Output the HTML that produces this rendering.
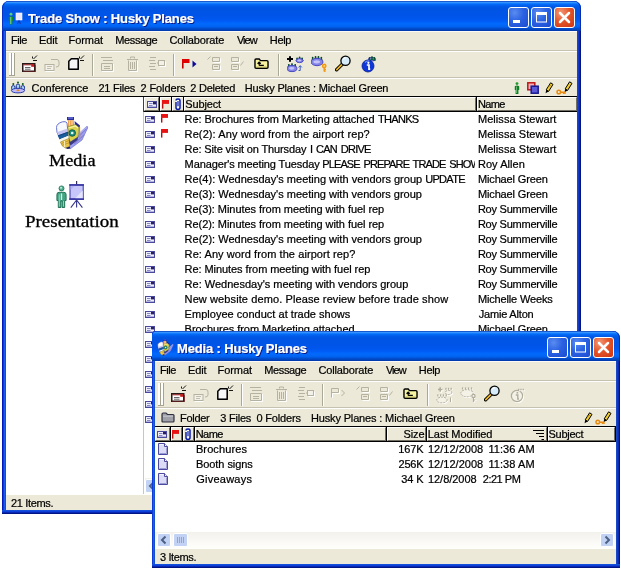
<!DOCTYPE html>
<html><head><meta charset="utf-8"><title>Trade Show : Husky Planes</title>
<style>
html,body{margin:0;padding:0;background:#fff;}
body{width:621px;height:569px;position:relative;overflow:hidden;font-family:"Liberation Sans",sans-serif;font-size:11px;color:#000;}
.b{position:absolute;display:block;box-sizing:border-box;}
.t{position:absolute;display:block;white-space:nowrap;line-height:20px;height:20px;-webkit-text-stroke:0.22px currentColor;}
.win{background:#0831d9;border-radius:8px 8px 0 0;}
.w2 .win{border-radius:5px 8px 0 0;}.w2 .tb{border-radius:5px 7px 0 0;}
.tb{border-radius:7px 7px 0 0;box-shadow:inset -1px 0 #0a2cb0,inset 1px 0 #0a34c4;background:linear-gradient(to bottom,#0a3cb8 0%,#3593ff 5%,#288eff 6%,#127dff 8%,#036ffc 10%,#0262ee 14%,#0057e5 20%,#0054e3 24%,#0055eb 56%,#005bf5 66%,#026afe 76%,#0062ef 86%,#0052d6 90%,#0046c0 95%,#0038a8 100%);}
.ttl{color:#fff;font-weight:bold;text-shadow:1px 1px 0 #0a1883;}
.cb{border:1px solid #fff;border-radius:3px;background:radial-gradient(circle at 30% 25%,#5a8cf0 0%,#2b62e2 45%,#1c4bd0 100%);}
.cb.x{background:radial-gradient(circle at 30% 25%,#f29a78 0%,#e4562a 45%,#cc3410 100%);}
.serif{font-family:"Liberation Serif",serif;}
.hc{background:#ece9d8;border-top:1px solid #fff;border-left:1px solid #fff;border-right:1px solid #716f64;border-bottom:1px solid #716f64;}
#root{position:absolute;left:0;top:0;width:621px;height:569px;will-change:transform;}
</style></head><body><div id="root">
<div class="b win" style="left:2px;top:1px;width:579px;height:513px;"></div>
<div class="b tb" style="left:2px;top:1px;width:579px;height:30px;"></div>
<div class="b " style="left:2px;top:31px;width:4px;height:483px;background:linear-gradient(to right,#0019b8 0 1px,#0c3cd8 1px 2px,#1e5cf0 2px 3px,#1450cc 3px 4px);"></div>
<div class="b " style="left:577px;top:31px;width:4px;height:483px;background:linear-gradient(to right,#1a48c4 0 1px,#1238c8 1px 2px,#0a28b0 2px 3px,#001484 3px 4px);"></div>
<div class="b " style="left:2px;top:510px;width:579px;height:4px;background:linear-gradient(to bottom,#1450d8 0 1px,#0c40d8 1px 2px,#0828b4 2px 3px,#001484 3px 4px);"></div>
<div class="b " style="left:6px;top:31px;width:571px;height:479px;background:#ece9d8;"></div>
<div class="b " style="left:6px;top:31px;width:571px;height:1px;background:#fbfaf6;"></div>
<span class="t ttl" style="left:28px;top:8.5px;letter-spacing:-0.128px;font-size:13px;">Trade Show : Husky Planes</span>
<div class="b cb x" style="left:554px;top:7px;width:21px;height:21px;"></div>
<svg class="b" style="left:554px;top:7px" width="21" height="21" viewBox="0 0 21 21" ><path d="M6 6L15 15M15 6L6 15" stroke="#fff" stroke-width="2.5" stroke-linecap="round" fill="none"/></svg>
<div class="b cb" style="left:531px;top:7px;width:21px;height:21px;"></div>
<svg class="b" style="left:531px;top:7px" width="21" height="21" viewBox="0 0 21 21" ><rect x="5.5" y="6.5" width="10" height="8.5" fill="none" stroke="#fff" stroke-width="1"/><rect x="5" y="5" width="11" height="3" fill="#fff"/></svg>
<div class="b cb" style="left:508px;top:7px;width:21px;height:21px;"></div>
<svg class="b" style="left:508px;top:7px" width="21" height="21" viewBox="0 0 21 21" ><rect x="5" y="13" width="7" height="3" fill="#fff"/></svg>
<span class="t " style="left:11.12px;top:30px;letter-spacing:-0.500px;">File</span>
<span class="t " style="left:39.12px;top:30px;letter-spacing:-0.200px;">Edit</span>
<span class="t " style="left:68.53px;top:30px;letter-spacing:-0.055px;">Format</span>
<span class="t " style="left:115.22px;top:30px;letter-spacing:-0.362px;">Message</span>
<span class="t " style="left:169.40px;top:30px;letter-spacing:-0.128px;">Collaborate</span>
<span class="t " style="left:236.90px;top:30px;letter-spacing:-0.950px;">View</span>
<span class="t " style="left:269.82px;top:30px;letter-spacing:-0.358px;">Help</span>
<div class="b " style="left:6px;top:50px;width:571px;height:1px;background:#c5c2b2;"></div>
<div class="b " style="left:6px;top:51px;width:571px;height:1px;background:#fff;"></div>
<div class="b " style="left:6px;top:77px;width:571px;height:1px;background:#c5c2b2;"></div>
<div class="b " style="left:6px;top:78px;width:571px;height:1px;background:#fff;"></div>
<div class="b " style="left:9px;top:53px;width:2px;height:23px;background:#fff;border-right:1px solid #a5a290;border-bottom:1px solid #a5a290;width:3px"></div>
<div class="b " style="left:12px;top:53px;width:2px;height:23px;background:#fff;border-right:1px solid #a5a290;border-bottom:1px solid #a5a290;width:3px"></div>
<div class="b " style="left:92px;top:54px;width:1px;height:22px;background:#aca899;"></div>
<div class="b " style="left:93px;top:54px;width:1px;height:22px;background:#fff;"></div>
<div class="b " style="left:173px;top:54px;width:1px;height:22px;background:#aca899;"></div>
<div class="b " style="left:174px;top:54px;width:1px;height:22px;background:#fff;"></div>
<div class="b " style="left:278px;top:54px;width:1px;height:22px;background:#aca899;"></div>
<div class="b " style="left:279px;top:54px;width:1px;height:22px;background:#fff;"></div>
<div class="b " style="left:6px;top:96px;width:571px;height:1px;background:#000;"></div>
<svg class="b" style="left:22px;top:63px" width="14" height="9" viewBox="0 0 14 9" ><rect x="0.75" y="0.75" width="12" height="7.5" fill="#fff" stroke="#2a1a1a" stroke-width="1.5"/><rect x="1.5" y="1.3" width="10.5" height="1" fill="#9a2020"/><rect x="9.2" y="1.2" width="3" height="2.6" fill="#c81818"/><path d="M3 4.5H8.5M3 6.2H8.5" stroke="#555" stroke-width="0.9"/><path d="M1 8.6H13.4V2" stroke="#6a2020" stroke-width="0.8" fill="none"/></svg>
<svg class="b" style="left:31px;top:55px" width="7" height="7" viewBox="0 0 7 7" ><path d="M6 0.5L2.5 4M1.5 1.5V3.5M2 5.5H6" stroke="#000" stroke-width="0.9" fill="none"/></svg>
<svg class="b" style="left:44px;top:57px" width="17" height="15" viewBox="0 0 17 15" ><rect x="1" y="7.5" width="9" height="6" fill="#f4f2e8" stroke="#b5b2a2" stroke-width="1"/><path d="M3 9.5H8M3 11.5H7" stroke="#c0bdae" stroke-width="1"/><path d="M7 2.5H13Q15 2.5 15 5V8Q15 10 12 10" fill="none" stroke="#b5b2a2" stroke-width="1"/><path d="M1.5 14.5H10.5" stroke="#fff" stroke-width="1"/></svg>
<svg class="b" style="left:68px;top:58px" width="12" height="13" viewBox="0 0 12 13" ><path d="M3.3 0.8H10.2V11.2H0.8V3.3Z" fill="#f6f6f6" stroke="#000" stroke-width="1.5" stroke-linejoin="round"/><path d="M10.4 2V11.4H2" stroke="#000" stroke-width="0.8" fill="none"/></svg>
<svg class="b" style="left:78px;top:55px" width="7" height="7" viewBox="0 0 7 7" ><path d="M6 0.5L2.5 4M1.5 1.5V3.5M2 5.5H6" stroke="#000" stroke-width="0.9" fill="none"/></svg>
<svg class="b" style="left:100px;top:56px" width="15" height="16" viewBox="0 0 15 16" ><path d="M1 1.5H12M3 4.5H13M1.5 7.5H12.5V14.5H1.5ZM4 10.5H10M4 12.5H10" fill="none" stroke="#b5b2a2" stroke-width="1"/><path d="M2 15.5H13.5V8" fill="none" stroke="#fff" stroke-width="1"/></svg>
<svg class="b" style="left:126px;top:56px" width="13" height="16" viewBox="0 0 13 16" ><path d="M4.5 2.5V1H8.5V2.5M1 3.5H12M2.5 4.5V14.5H10.5V4.5M4.5 6V13M6.5 6V13M8.5 6V13" fill="none" stroke="#b5b2a2" stroke-width="1"/><path d="M3.5 15.5H11.5V5" fill="none" stroke="#fff" stroke-width="1"/></svg>
<svg class="b" style="left:148px;top:56px" width="18" height="16" viewBox="0 0 18 16" ><path d="M2 1.5H8M1 4.5H7M2 7.5H8M1 10.5H7M2 13.5H8" stroke="#b5b2a2" stroke-width="1" fill="none"/><rect x="10.5" y="4.5" width="6" height="5" fill="#f4f2e8" stroke="#b5b2a2"/><path d="M9 7H10.5" stroke="#b5b2a2"/><path d="M11.5 10.5H17.5V5.5" stroke="#fff" fill="none"/></svg>
<svg class="b" style="left:182px;top:58.5px" width="16" height="12" viewBox="0 0 16 12" ><rect x="0" y="0" width="1.6" height="9.5" fill="#c00000"/><rect x="0" y="0" width="7.5" height="4" fill="#e00000"/><path d="M10.5 1.5L14.5 5L10.5 8.5Z" fill="#0a0a9c"/></svg>
<svg class="b" style="left:207px;top:56px" width="14" height="16" viewBox="0 0 14 16" ><path d="M0.5 3.5L3.5 0.5M5.5 1.5H12.5V5.5H5.5ZM5.5 8.5H12.5V13.5H5.5ZM7 10.5H11" fill="none" stroke="#b5b2a2"/><path d="M6.5 6.5H13.5V2.5M6.5 14.5H13.5V9.5" fill="none" stroke="#fff"/></svg>
<svg class="b" style="left:229.5px;top:56px" width="15" height="16" viewBox="0 0 15 16" ><path d="M1.5 1.5H8.5V5.5H1.5ZM1.5 8.5H8.5V13.5H1.5ZM3 10.5H7M10.5 9.5L13.5 5.5" fill="none" stroke="#b5b2a2"/><path d="M2.5 6.5H9.5V2.5M2.5 14.5H9.5V9.5" fill="none" stroke="#fff"/></svg>
<svg class="b" style="left:253.5px;top:58px" width="15" height="11.2" viewBox="0 0 16 12"><path d="M1 2.2Q1 1 2.2 1H5.5L7 2.8H13.8Q15 2.8 15 4V9.8Q15 11 13.8 11H2.2Q1 11 1 9.8Z" fill="#f7f3a0" stroke="#000" stroke-width="1.5"/><path d="M2.3 9.6H13.6" stroke="#c8c060" stroke-width="1"/><path d="M5.5 8H10.5M5.5 8V4.8M3.8 6.2L5.5 4.4L7.2 6.2" fill="none" stroke="#000" stroke-width="1.3"/></svg>
<svg class="b" style="left:287px;top:56.2px" width="18" height="18" viewBox="0 0 18 18" ><path d="M0 3H6M3 0.3V5.7" stroke="#000" stroke-width="2"/><path d="M8.6 5L10.1 1.7L11.6 5Z" fill="#0c5c40"/><circle cx="10.1" cy="2.3" r="0.9" fill="#0a4a2a"/><path d="M11.1 4.2L12.6 0.9L14.1 4.2Z" fill="#0c5c40"/><circle cx="12.6" cy="1.5" r="0.9" fill="#0a4a2a"/><path d="M13.6 5L15.1 1.7L16.6 5Z" fill="#0c5c40"/><circle cx="15.1" cy="2.3" r="0.9" fill="#0a4a2a"/><ellipse cx="12.6" cy="4.6" rx="3.5" ry="2" fill="#8484e4" stroke="#4040c0" stroke-width="0.9"/><ellipse cx="12.3" cy="4.4" rx="1.925" ry="0.9" fill="#c4c4fa"/><path d="M0.3 11.6L1.8 8.3L3.3 11.6Z" fill="#0c5c40"/><circle cx="1.8" cy="8.9" r="0.9" fill="#0a4a2a"/><path d="M3.5 10.8L5 7.5L6.5 10.8Z" fill="#0c5c40"/><circle cx="5" cy="8.1" r="0.9" fill="#0a4a2a"/><path d="M6.7 11.6L8.2 8.3L9.7 11.6Z" fill="#0c5c40"/><circle cx="8.2" cy="8.9" r="0.9" fill="#0a4a2a"/><ellipse cx="5" cy="12.5" rx="4.9" ry="3.1" fill="#8484e4" stroke="#4040c0" stroke-width="0.9"/><ellipse cx="4.7" cy="12.3" rx="2.695" ry="1.395" fill="#c4c4fa"/><path d="M13.2 14.5V10M11.6 11.4L13.2 9.6L14.8 11.4M11.5 14.5H13.2" stroke="#3c5cc4" stroke-width="1" fill="none"/></svg>
<svg class="b" style="left:311px;top:56px" width="18" height="18" viewBox="0 0 18 18" ><path d="M0.15 4.4L1.65 1.1L3.15 4.4Z" fill="#0c5c40"/><circle cx="1.65" cy="1.7" r="0.9" fill="#0a4a2a"/><path d="M3.05 3.6L4.55 0.3L6.05 3.6Z" fill="#0c5c40"/><circle cx="4.55" cy="0.9" r="0.9" fill="#0a4a2a"/><path d="M5.95 3.6L7.45 0.3L8.95 3.6Z" fill="#0c5c40"/><circle cx="7.45" cy="0.9" r="0.9" fill="#0a4a2a"/><path d="M8.85 4.4L10.35 1.1L11.85 4.4Z" fill="#0c5c40"/><circle cx="10.35" cy="1.7" r="0.9" fill="#0a4a2a"/><ellipse cx="6" cy="6" rx="6" ry="3.7" fill="#8484e4" stroke="#4040c0" stroke-width="0.9"/><ellipse cx="5.7" cy="5.8" rx="3.3" ry="1.665" fill="#c4c4fa"/><circle cx="13.2" cy="10" r="1.7" fill="#f8d060" stroke="#f09a18" stroke-width="1.4"/><path d="M13.2 12V15.6M13.2 13.6H15M13.2 15.2H14.6" stroke="#f09a18" stroke-width="1.5"/></svg>
<svg class="b" style="left:335px;top:55px" width="16" height="17" viewBox="0 0 16 17" ><path d="M7.2 9.2L1.6 14.8" stroke="#000" stroke-width="3.4" stroke-linecap="round"/><path d="M7 9.4L1.8 14.6" stroke="#f0b820" stroke-width="1.6" stroke-linecap="round"/><circle cx="10.5" cy="5.8" r="4.6" fill="#d6ecfb" stroke="#000" stroke-width="1.3"/><path d="M8 4.5Q9 2.8 11 2.6" stroke="#fff" stroke-width="1.3" fill="none"/></svg>
<svg class="b" style="left:361px;top:56px" width="16" height="17" viewBox="0 0 16 17" ><ellipse cx="11" cy="3.2" rx="3.6" ry="1.8" fill="#8484e4" stroke="#4040c0" stroke-width="0.9"/><ellipse cx="10.7" cy="3" rx="1.98" ry="0.81" fill="#c4c4fa"/><path d="M7.1 4.7L8.6 1.4L10.1 4.7Z" fill="#0c5c40"/><circle cx="8.6" cy="2" r="0.9" fill="#0a4a2a"/><path d="M9.5 3.9L11 0.6L12.5 3.9Z" fill="#0c5c40"/><circle cx="11" cy="1.2" r="0.9" fill="#0a4a2a"/><path d="M11.9 4.7L13.4 1.4L14.9 4.7Z" fill="#0c5c40"/><circle cx="13.4" cy="2" r="0.9" fill="#0a4a2a"/><circle cx="7" cy="10" r="6" fill="#1038d8" stroke="#0a1e90" stroke-width="0.8"/><path d="M4 6.5Q6 4.5 8.5 5" stroke="#6f90f5" stroke-width="1.2" fill="none"/><circle cx="7.4" cy="6.8" r="1.1" fill="#fff"/><path d="M5.8 9H8V13.2H9.2" stroke="#fff" stroke-width="1.7" fill="none"/></svg>
<svg class="b" style="left:10px;top:81px" width="16" height="13" viewBox="0 0 16 13" ><circle cx="3.3" cy="3" r="1" fill="#0a5a1a"/><rect x="1.6" y="4.6" width="3.4" height="4.6" rx="1.5" fill="#a8d4f8" stroke="#102488" stroke-width="0.9"/><circle cx="8" cy="1.5" r="1" fill="#0a5a1a"/><rect x="6.3" y="3.1" width="3.4" height="4.6" rx="1.5" fill="#a8d4f8" stroke="#102488" stroke-width="0.9"/><circle cx="12.8" cy="3" r="1" fill="#0a5a1a"/><rect x="11.1" y="4.6" width="3.4" height="4.6" rx="1.5" fill="#a8d4f8" stroke="#102488" stroke-width="0.9"/><ellipse cx="8" cy="9.6" rx="6.6" ry="2.3" fill="#c0b8f8" stroke="#1830a0" stroke-width="0.9"/><ellipse cx="8" cy="9.4" rx="1.6" ry="0.8" fill="#e08a20"/></svg>
<span class="t " style="left:31.50px;top:78px;letter-spacing:0.000px;">Conference</span>
<span class="t " style="left:98.50px;top:78px;letter-spacing:-0.246px;">21 Files</span>
<span class="t " style="left:140.40px;top:78px;letter-spacing:-0.088px;">2 Folders</span>
<span class="t " style="left:190.30px;top:78px;letter-spacing:-0.263px;">2 Deleted</span>
<span class="t " style="left:244.72px;top:78px;letter-spacing:-0.156px;">Husky Planes : Michael Green</span>
<svg class="b" style="left:514px;top:82px" width="6" height="12" viewBox="0 0 6 12" ><circle cx="3" cy="1.6" r="1.4" fill="#1c9a30"/><path d="M0.8 4.2Q3 3 5.2 4.2V8H4.4V12H1.6V8H0.8Z" fill="#0e7a22"/><path d="M2.6 4.5V11" stroke="#7fd08a" stroke-width="0.8"/></svg>
<svg class="b" style="left:527px;top:82px" width="12" height="12" viewBox="0 0 12 12" ><rect x="0.8" y="0.8" width="7" height="7" fill="#f4b0b0" stroke="#c01818" stroke-width="1.5"/><rect x="4.2" y="4.2" width="7" height="7" fill="#5a5ad8" stroke="#181890" stroke-width="1.5"/></svg>
<svg class="b" style="left:545px;top:82px" width="9" height="12" viewBox="0 0 9 12" ><path d="M5.6 0.8L8 2.4L3.6 9.4L1.2 7.8Z" fill="#f2cc30" stroke="#000" stroke-width="1"/><path d="M3 5L6 3" stroke="#8a6a00" stroke-width="0.6"/><path d="M1.2 7.8L0.6 11.2L3.6 9.4Z" fill="#000"/></svg>
<svg class="b" style="left:556px;top:81px" width="17" height="14" viewBox="0 0 17 14" ><path d="M13.6 0.8L16 2.4L11.6 9.4L9.2 7.8Z" fill="#f2cc30" stroke="#000" stroke-width="1"/><path d="M9.2 7.8L8.6 11.2L11.6 9.4Z" fill="#000"/><circle cx="2.8" cy="11" r="1.8" fill="none" stroke="#e88a10" stroke-width="1.5"/><path d="M4.5 11.2H9.5M7.5 11.2V13M9 11.2V13" stroke="#e88a10" stroke-width="1.4"/></svg>
<div class="b " style="left:6px;top:97px;width:137px;height:397px;background:#fff;"></div>
<div class="b " style="left:143px;top:112px;width:1px;height:382px;background:#c9c6ba;"></div>
<div class="b " style="left:144px;top:97px;width:1px;height:397px;background:#fff;"></div>
<div class="b " style="left:145px;top:97px;width:432px;height:397px;background:#fff;"></div>
<div class="b " style="left:143px;top:96px;width:434px;height:1px;background:#000;"></div>
<div class="b " style="left:143px;top:111px;width:434px;height:1px;background:#000;"></div>
<div class="b " style="left:143px;top:97px;width:1px;height:15px;background:#404040;"></div>
<div class="b hc" style="left:144px;top:97px;width:15px;height:14px;"></div>
<div class="b hc" style="left:160px;top:97px;width:12px;height:14px;"></div>
<div class="b hc" style="left:172px;top:97px;width:12px;height:14px;"></div>
<div class="b hc" style="left:184px;top:97px;width:292px;height:14px;"></div>
<div class="b hc" style="left:477px;top:97px;width:100px;height:14px;"></div>
<div class="b " style="left:159px;top:97px;width:1px;height:14px;background:#000;"></div>
<div class="b " style="left:171px;top:97px;width:1px;height:14px;background:#000;"></div>
<div class="b " style="left:183px;top:97px;width:1px;height:14px;background:#000;"></div>
<div class="b " style="left:476px;top:97px;width:1px;height:14px;background:#000;"></div>
<svg class="b" style="left:146.5px;top:101px" width="10" height="7" viewBox="0 0 10 7" ><rect x="0.5" y="0.5" width="9" height="6" fill="#eeeefc" stroke="#4a4a9c"/><path d="M2 2.5H5.5M2 4.5H5.5" stroke="#8888c4"/><rect x="1" y="5" width="8" height="1" fill="#b4b4e0"/><rect x="6" y="1" width="3" height="2.4" fill="#2a2060"/></svg>
<svg class="b" style="left:161.5px;top:100px" width="8" height="9" viewBox="0 0 8 9" ><rect x="0" y="0" width="1.4" height="8.6" fill="#b01010"/><rect x="0" y="0" width="7" height="3.9" fill="#e81414"/></svg>
<svg class="b" style="left:174.5px;top:97.5px" width="6" height="13" viewBox="0 0 6 13" ><path d="M1 4V9.5Q1 11.4 3 11.4Q5 11.4 5 9.5V2.6Q5 0.9 3 0.9Q1 0.9 1 2.6" fill="#fff" stroke="#0c1ea8" stroke-width="1.5"/><path d="M3 3V8.2" stroke="#0c1ea8" stroke-width="1.2"/></svg>
<span class="t " style="left:185.30px;top:94px;letter-spacing:-0.154px;">Subject</span>
<span class="t " style="left:477.93px;top:94px;letter-spacing:-0.642px;">Name</span>
<svg class="b" style="left:145px;top:116px" width="10" height="7" viewBox="0 0 10 7" ><rect x="0.5" y="0.5" width="9" height="6" fill="#eeeefc" stroke="#4a4a9c"/><path d="M2 2.5H5.5M2 4.5H5.5" stroke="#8888c4"/><rect x="1" y="5" width="8" height="1" fill="#b4b4e0"/><rect x="6" y="1" width="3" height="2.4" fill="#2a2060"/></svg>
<svg class="b" style="left:161px;top:114px" width="8" height="9" viewBox="0 0 8 9" ><rect x="0" y="0" width="1.4" height="8.6" fill="#b01010"/><rect x="0" y="0" width="7" height="3.9" fill="#e81414"/></svg>
<span class="t" style="left:184.62px;top:109px;letter-spacing:-0.058px">Re: Brochures from Marketing attached <span style="letter-spacing:-0.700px;margin-left:0.61px">THANKS</span></span>
<span class="t " style="left:477.93px;top:109px;letter-spacing:0.061px;">Melissa Stewart</span>
<svg class="b" style="left:145px;top:131px" width="10" height="7" viewBox="0 0 10 7" ><rect x="0.5" y="0.5" width="9" height="6" fill="#eeeefc" stroke="#4a4a9c"/><path d="M2 2.5H5.5M2 4.5H5.5" stroke="#8888c4"/><rect x="1" y="5" width="8" height="1" fill="#b4b4e0"/><rect x="6" y="1" width="3" height="2.4" fill="#2a2060"/></svg>
<svg class="b" style="left:161px;top:129px" width="8" height="9" viewBox="0 0 8 9" ><rect x="0" y="0" width="1.4" height="8.6" fill="#b01010"/><rect x="0" y="0" width="7" height="3.9" fill="#e81414"/></svg>
<span class="t " style="left:184.62px;top:124px;letter-spacing:0.098px;">Re(2): Any word from the airport rep?</span>
<span class="t " style="left:477.93px;top:124px;letter-spacing:0.061px;">Melissa Stewart</span>
<svg class="b" style="left:145px;top:146px" width="10" height="7" viewBox="0 0 10 7" ><rect x="0.5" y="0.5" width="9" height="6" fill="#eeeefc" stroke="#4a4a9c"/><path d="M2 2.5H5.5M2 4.5H5.5" stroke="#8888c4"/><rect x="1" y="5" width="8" height="1" fill="#b4b4e0"/><rect x="6" y="1" width="3" height="2.4" fill="#2a2060"/></svg>
<span class="t" style="left:184.62px;top:139px;letter-spacing:-0.134px">Re: Site visit on Thursday <span style="letter-spacing:-0.750px;margin-left:0.73px;word-spacing:1.5px">I CAN DRIVE</span></span>
<span class="t " style="left:477.93px;top:139px;letter-spacing:0.061px;">Melissa Stewart</span>
<svg class="b" style="left:145px;top:161px" width="10" height="7" viewBox="0 0 10 7" ><rect x="0.5" y="0.5" width="9" height="6" fill="#eeeefc" stroke="#4a4a9c"/><path d="M2 2.5H5.5M2 4.5H5.5" stroke="#8888c4"/><rect x="1" y="5" width="8" height="1" fill="#b4b4e0"/><rect x="6" y="1" width="3" height="2.4" fill="#2a2060"/></svg>
<div class="b" style="left:183px;top:157px;width:291.5px;height:15px;overflow:hidden"><span class="t" style="left:1.62px;top:-3px;letter-spacing:-0.117px">Manager's meeting Tuesday <span style="letter-spacing:-0.873px;margin-left:-0.25px;word-spacing:1.5px">PLEASE PREPARE TRADE SHOW</span></span></div>
<span class="t " style="left:477.93px;top:154px;letter-spacing:0.062px;">Roy Allen</span>
<svg class="b" style="left:145px;top:176px" width="10" height="7" viewBox="0 0 10 7" ><rect x="0.5" y="0.5" width="9" height="6" fill="#eeeefc" stroke="#4a4a9c"/><path d="M2 2.5H5.5M2 4.5H5.5" stroke="#8888c4"/><rect x="1" y="5" width="8" height="1" fill="#b4b4e0"/><rect x="6" y="1" width="3" height="2.4" fill="#2a2060"/></svg>
<span class="t" style="left:184.62px;top:169px;letter-spacing:0.005px">Re(4): Wednesday's meeting with vendors group <span style="letter-spacing:-0.685px;margin-left:-0.07px">UPDATE</span></span>
<span class="t " style="left:477.93px;top:169px;letter-spacing:-0.133px;">Michael Green</span>
<svg class="b" style="left:145px;top:191px" width="10" height="7" viewBox="0 0 10 7" ><rect x="0.5" y="0.5" width="9" height="6" fill="#eeeefc" stroke="#4a4a9c"/><path d="M2 2.5H5.5M2 4.5H5.5" stroke="#8888c4"/><rect x="1" y="5" width="8" height="1" fill="#b4b4e0"/><rect x="6" y="1" width="3" height="2.4" fill="#2a2060"/></svg>
<span class="t " style="left:184.62px;top:184px;letter-spacing:0.000px;">Re(3): Wednesday's meeting with vendors group</span>
<span class="t " style="left:477.93px;top:184px;letter-spacing:-0.133px;">Michael Green</span>
<svg class="b" style="left:145px;top:206px" width="10" height="7" viewBox="0 0 10 7" ><rect x="0.5" y="0.5" width="9" height="6" fill="#eeeefc" stroke="#4a4a9c"/><path d="M2 2.5H5.5M2 4.5H5.5" stroke="#8888c4"/><rect x="1" y="5" width="8" height="1" fill="#b4b4e0"/><rect x="6" y="1" width="3" height="2.4" fill="#2a2060"/></svg>
<span class="t " style="left:184.62px;top:199px;letter-spacing:-0.053px;">Re(3): Minutes from meeting with fuel rep</span>
<span class="t " style="left:477.93px;top:199px;letter-spacing:-0.241px;">Roy Summerville</span>
<svg class="b" style="left:145px;top:221px" width="10" height="7" viewBox="0 0 10 7" ><rect x="0.5" y="0.5" width="9" height="6" fill="#eeeefc" stroke="#4a4a9c"/><path d="M2 2.5H5.5M2 4.5H5.5" stroke="#8888c4"/><rect x="1" y="5" width="8" height="1" fill="#b4b4e0"/><rect x="6" y="1" width="3" height="2.4" fill="#2a2060"/></svg>
<span class="t " style="left:184.62px;top:214px;letter-spacing:-0.053px;">Re(2): Minutes from meeting with fuel rep</span>
<span class="t " style="left:477.93px;top:214px;letter-spacing:-0.241px;">Roy Summerville</span>
<svg class="b" style="left:145px;top:236px" width="10" height="7" viewBox="0 0 10 7" ><rect x="0.5" y="0.5" width="9" height="6" fill="#eeeefc" stroke="#4a4a9c"/><path d="M2 2.5H5.5M2 4.5H5.5" stroke="#8888c4"/><rect x="1" y="5" width="8" height="1" fill="#b4b4e0"/><rect x="6" y="1" width="3" height="2.4" fill="#2a2060"/></svg>
<span class="t " style="left:184.62px;top:229px;letter-spacing:0.000px;">Re(2): Wednesday's meeting with vendors group</span>
<span class="t " style="left:477.93px;top:229px;letter-spacing:-0.241px;">Roy Summerville</span>
<svg class="b" style="left:145px;top:251px" width="10" height="7" viewBox="0 0 10 7" ><rect x="0.5" y="0.5" width="9" height="6" fill="#eeeefc" stroke="#4a4a9c"/><path d="M2 2.5H5.5M2 4.5H5.5" stroke="#8888c4"/><rect x="1" y="5" width="8" height="1" fill="#b4b4e0"/><rect x="6" y="1" width="3" height="2.4" fill="#2a2060"/></svg>
<span class="t " style="left:184.62px;top:244px;letter-spacing:0.077px;">Re: Any word from the airport rep?</span>
<span class="t " style="left:477.93px;top:244px;letter-spacing:-0.241px;">Roy Summerville</span>
<svg class="b" style="left:145px;top:266px" width="10" height="7" viewBox="0 0 10 7" ><rect x="0.5" y="0.5" width="9" height="6" fill="#eeeefc" stroke="#4a4a9c"/><path d="M2 2.5H5.5M2 4.5H5.5" stroke="#8888c4"/><rect x="1" y="5" width="8" height="1" fill="#b4b4e0"/><rect x="6" y="1" width="3" height="2.4" fill="#2a2060"/></svg>
<span class="t " style="left:184.62px;top:259px;letter-spacing:-0.070px;">Re: Minutes from meeting with fuel rep</span>
<span class="t " style="left:477.93px;top:259px;letter-spacing:-0.241px;">Roy Summerville</span>
<svg class="b" style="left:145px;top:281px" width="10" height="7" viewBox="0 0 10 7" ><rect x="0.5" y="0.5" width="9" height="6" fill="#eeeefc" stroke="#4a4a9c"/><path d="M2 2.5H5.5M2 4.5H5.5" stroke="#8888c4"/><rect x="1" y="5" width="8" height="1" fill="#b4b4e0"/><rect x="6" y="1" width="3" height="2.4" fill="#2a2060"/></svg>
<span class="t " style="left:184.62px;top:274px;letter-spacing:-0.003px;">Re: Wednesday's meeting with vendors group</span>
<span class="t " style="left:477.93px;top:274px;letter-spacing:-0.241px;">Roy Summerville</span>
<svg class="b" style="left:145px;top:296px" width="10" height="7" viewBox="0 0 10 7" ><rect x="0.5" y="0.5" width="9" height="6" fill="#eeeefc" stroke="#4a4a9c"/><path d="M2 2.5H5.5M2 4.5H5.5" stroke="#8888c4"/><rect x="1" y="5" width="8" height="1" fill="#b4b4e0"/><rect x="6" y="1" width="3" height="2.4" fill="#2a2060"/></svg>
<span class="t " style="left:184.62px;top:289px;letter-spacing:0.101px;">New website demo. Please review before trade show</span>
<span class="t " style="left:477.93px;top:289px;letter-spacing:-0.148px;">Michelle Weeks</span>
<svg class="b" style="left:145px;top:311px" width="10" height="7" viewBox="0 0 10 7" ><rect x="0.5" y="0.5" width="9" height="6" fill="#eeeefc" stroke="#4a4a9c"/><path d="M2 2.5H5.5M2 4.5H5.5" stroke="#8888c4"/><rect x="1" y="5" width="8" height="1" fill="#b4b4e0"/><rect x="6" y="1" width="3" height="2.4" fill="#2a2060"/></svg>
<span class="t " style="left:184.62px;top:304px;letter-spacing:0.021px;">Employee conduct at trade shows</span>
<span class="t " style="left:478.68px;top:304px;letter-spacing:-0.182px;">Jamie Alton</span>
<svg class="b" style="left:145px;top:326px" width="10" height="7" viewBox="0 0 10 7" ><rect x="0.5" y="0.5" width="9" height="6" fill="#eeeefc" stroke="#4a4a9c"/><path d="M2 2.5H5.5M2 4.5H5.5" stroke="#8888c4"/><rect x="1" y="5" width="8" height="1" fill="#b4b4e0"/><rect x="6" y="1" width="3" height="2.4" fill="#2a2060"/></svg>
<span class="t " style="left:184.62px;top:319px;letter-spacing:-0.058px;">Brochures from Marketing attached</span>
<span class="t " style="left:477.93px;top:319px;letter-spacing:-0.133px;">Michael Green</span>
<svg class="b" style="left:145px;top:341px" width="10" height="7" viewBox="0 0 10 7" ><rect x="0.5" y="0.5" width="9" height="6" fill="#eeeefc" stroke="#4a4a9c"/><path d="M2 2.5H5.5M2 4.5H5.5" stroke="#8888c4"/><rect x="1" y="5" width="8" height="1" fill="#b4b4e0"/><rect x="6" y="1" width="3" height="2.4" fill="#2a2060"/></svg>
<svg class="b" style="left:145px;top:356px" width="10" height="7" viewBox="0 0 10 7" ><rect x="0.5" y="0.5" width="9" height="6" fill="#eeeefc" stroke="#4a4a9c"/><path d="M2 2.5H5.5M2 4.5H5.5" stroke="#8888c4"/><rect x="1" y="5" width="8" height="1" fill="#b4b4e0"/><rect x="6" y="1" width="3" height="2.4" fill="#2a2060"/></svg>
<svg class="b" style="left:145px;top:371px" width="10" height="7" viewBox="0 0 10 7" ><rect x="0.5" y="0.5" width="9" height="6" fill="#eeeefc" stroke="#4a4a9c"/><path d="M2 2.5H5.5M2 4.5H5.5" stroke="#8888c4"/><rect x="1" y="5" width="8" height="1" fill="#b4b4e0"/><rect x="6" y="1" width="3" height="2.4" fill="#2a2060"/></svg>
<svg class="b" style="left:145px;top:386px" width="10" height="7" viewBox="0 0 10 7" ><rect x="0.5" y="0.5" width="9" height="6" fill="#eeeefc" stroke="#4a4a9c"/><path d="M2 2.5H5.5M2 4.5H5.5" stroke="#8888c4"/><rect x="1" y="5" width="8" height="1" fill="#b4b4e0"/><rect x="6" y="1" width="3" height="2.4" fill="#2a2060"/></svg>
<svg class="b" style="left:145px;top:401px" width="10" height="7" viewBox="0 0 10 7" ><rect x="0.5" y="0.5" width="9" height="6" fill="#eeeefc" stroke="#4a4a9c"/><path d="M2 2.5H5.5M2 4.5H5.5" stroke="#8888c4"/><rect x="1" y="5" width="8" height="1" fill="#b4b4e0"/><rect x="6" y="1" width="3" height="2.4" fill="#2a2060"/></svg>
<svg class="b" style="left:145px;top:416px" width="10" height="7" viewBox="0 0 10 7" ><rect x="0.5" y="0.5" width="9" height="6" fill="#eeeefc" stroke="#4a4a9c"/><path d="M2 2.5H5.5M2 4.5H5.5" stroke="#8888c4"/><rect x="1" y="5" width="8" height="1" fill="#b4b4e0"/><rect x="6" y="1" width="3" height="2.4" fill="#2a2060"/></svg>
<div class="b " style="left:145px;top:478px;width:432px;height:16px;background:linear-gradient(to bottom,#f3f1ec,#fefefb);"></div>
<div class="b " style="left:145px;top:479px;width:14px;height:14px;background:#c1d2f5;border:1px solid #fff;border-radius:2px;"></div>
<svg class="b" style="left:145px;top:479px" width="14" height="14" viewBox="0 0 14 14" ><path d="M8.5 3.5L5 7L8.5 10.5" stroke="#4d6185" stroke-width="2" fill="none"/></svg>
<div class="b " style="left:6px;top:494px;width:571px;height:1px;background:#fff;"></div>
<span class="t " style="left:11px;top:492.5px;letter-spacing:-0.348px;">21 Items.</span>
<span class="t serif" style="left:48.5px;top:150.5px;font-size:17px;transform-origin:0 0;transform:scaleX(1.0709);-webkit-text-stroke:0.32px #000;">Media</span>
<span class="t serif" style="left:24.5px;top:211.5px;font-size:17px;transform-origin:0 0;transform:scaleX(1.1153);-webkit-text-stroke:0.32px #000;">Presentation</span>
<svg class="b" style="left:55px;top:116px" width="34" height="34" viewBox="0 0 34 34" ><path d="M15 26L31.5 10.5Q33 10 32.6 12L27 24L15.5 32.6L12.5 30.5Z" fill="#a0a0ee" stroke="#6c6cd4" stroke-width="0.7"/><path d="M19 25L31 13M19 28L29 19" stroke="#8484dc" stroke-width="1.1"/><path d="M22 20L31.5 11" stroke="#c4c4f8" stroke-width="0.9"/><path d="M1.5 11.5Q1.5 7.5 7.5 5.8Q10.5 5 12 6.8L13 17L4 21Q1.2 16 1.5 11.5Z" fill="#f8f8ff" stroke="#5a66c8" stroke-width="0.9"/><path d="M2.2 16L12.6 12.4L13 17L4 21Q2.6 18.5 2.2 16Z" fill="#c4c4f4"/><path d="M2.8 19.6L13 15.8L13.6 19.8L4.4 23.6Z" fill="#1b5c9c"/><path d="M3 19.8L13 16.2" stroke="#0e3a70" stroke-width="0.8"/><path d="M4.4 23.6L13.6 19.8L14 22.4L5.4 26Z" fill="#f6f6ec"/><path d="M5.4 26L14 22.4L14.6 30.6L10.4 32L7 29.6Z" fill="#eac648" stroke="#8a6a14" stroke-width="0.5"/><path d="M6.2 27.6L14.2 24.4M7 29.4L14.4 26.6" stroke="#c4922a" stroke-width="0.9"/><path d="M9.5 25V31" stroke="#f8ecb0" stroke-width="1"/><rect x="12" y="1" width="7" height="3.2" fill="#2a2a98"/><path d="M13 2H18" stroke="#8490f4" stroke-width="1"/><path d="M13 4.2H18.6L19.4 10.5H13Z" fill="#f0a04c"/><path d="M14.6 4.6V10M17 4.6V10" stroke="#fde6c4" stroke-width="0.9"/><path d="M19.5 5L25 9.4L24.4 12.5L20 9.5Z" fill="#2a2a90"/><path d="M24.6 11V22.5" stroke="#e28434" stroke-width="1.1"/><path d="M13 10.5L20.5 8.5L24 11.5L23 21L15.2 26L14 22Z" fill="#d9d24a" stroke="#6a6a1c" stroke-width="0.5"/><path d="M13.4 12L20.6 10L23 12" stroke="#f6f2a8" stroke-width="1.2" fill="none"/><circle cx="17.2" cy="17" r="3.3" fill="#1f8f7c" stroke="#0c4a44" stroke-width="0.8"/><circle cx="17.2" cy="17" r="1.3" fill="#e8f6f4"/><path d="M14 22L15.2 26L23 21L22.6 24L15.5 29.5L14.4 27Z" fill="#3a3a84"/><path d="M10.4 32L14.6 30.6L15.5 32.6L12.5 33Z" fill="#20205c"/></svg>
<svg class="b" style="left:55px;top:181px" width="31" height="28" viewBox="0 0 31 28" ><g transform="translate(1.1,0)"><circle cx="5.4" cy="7.4" r="2.5" fill="#52b090" stroke="#1c6e52" stroke-width="0.8"/><circle cx="4.9" cy="6.8" r="1" fill="#c4eee0"/><path d="M0.8 13.5Q0.8 11.3 3 11.3H7.8Q10 11.3 10 13.5V19.5H8.6V26.5H6V20H4.8V26.5H2.2V19.5H0.8Z" fill="#44a584" stroke="#1a6a4e" stroke-width="0.9"/><path d="M5.4 12.5V19" stroke="#d8f4ec" stroke-width="1.3"/><path d="M3.2 13.5V25.5M7.4 20V25.5" stroke="#8fd4bc" stroke-width="1"/></g><path d="M21.6 0V3.4" stroke="#303058" stroke-width="1.2"/><rect x="15" y="4" width="13.2" height="14" fill="#c6c6fa" stroke="#3434a4" stroke-width="1"/><path d="M20 17.5L27.7 9.5V17.5Z" fill="#e4e4ff"/><path d="M15.6 9L20 4.6H15.6Z" fill="#b4b4f4"/><rect x="14.2" y="3.2" width="14.8" height="1.5" fill="#3030a0"/><rect x="14.2" y="17.4" width="14.8" height="1.5" fill="#3030a0"/><path d="M21.6 19L15.8 26.6M21.6 19V26.4M21.6 19L27.4 26.6" stroke="#34348c" stroke-width="1.1" fill="none"/></svg>
<svg class="b" style="left:8px;top:12px" width="16" height="14" viewBox="0 0 16 14" ><circle cx="3" cy="2.2" r="1.4" fill="#5ad070"/><path d="M0.8 5Q3 3.6 5.2 5V9H4.4V12.5H1.6V9H0.8Z" fill="#0e8a2a"/><path d="M2.8 5V12" stroke="#a0e8b0" stroke-width="0.8"/><rect x="8" y="1" width="6" height="7" fill="#e8e8ff" stroke="#fff" stroke-width="0.6"/><path d="M9.5 12L11 8.5L12.5 12" stroke="#1030a0" fill="none" stroke-width="0.8"/></svg>
<div class="b w2" style="left:152px;top:0;width:469px;height:569px;overflow:hidden"><div class="b" style="left:-152px;top:0;width:621px;height:569px">
<div class="b win" style="left:151px;top:331px;width:469px;height:237px;"></div>
<div class="b tb" style="left:151px;top:331px;width:469px;height:30px;"></div>
<div class="b " style="left:151px;top:361px;width:4px;height:207px;background:linear-gradient(to right,#0019b8 0 1px,#0c3cd8 1px 2px,#1e5cf0 2px 3px,#1450cc 3px 4px);"></div>
<div class="b " style="left:616px;top:361px;width:4px;height:207px;background:linear-gradient(to right,#1a48c4 0 1px,#1238c8 1px 2px,#0a28b0 2px 3px,#001484 3px 4px);"></div>
<div class="b " style="left:151px;top:564px;width:469px;height:4px;background:linear-gradient(to bottom,#1450d8 0 1px,#0c40d8 1px 2px,#0828b4 2px 3px,#001484 3px 4px);"></div>
<div class="b " style="left:155px;top:361px;width:461px;height:203px;background:#ece9d8;"></div>
<div class="b " style="left:155px;top:361px;width:461px;height:1px;background:#fbfaf6;"></div>
<span class="t ttl" style="left:177px;top:338.5px;letter-spacing:-0.155px;font-size:13px;">Media : Husky Planes</span>
<div class="b cb x" style="left:593px;top:337px;width:21px;height:21px;"></div>
<svg class="b" style="left:593px;top:337px" width="21" height="21" viewBox="0 0 21 21" ><path d="M6 6L15 15M15 6L6 15" stroke="#fff" stroke-width="2.5" stroke-linecap="round" fill="none"/></svg>
<div class="b cb" style="left:570px;top:337px;width:21px;height:21px;"></div>
<svg class="b" style="left:570px;top:337px" width="21" height="21" viewBox="0 0 21 21" ><rect x="5.5" y="6.5" width="10" height="8.5" fill="none" stroke="#fff" stroke-width="1"/><rect x="5" y="5" width="11" height="3" fill="#fff"/></svg>
<div class="b cb" style="left:547px;top:337px;width:21px;height:21px;"></div>
<svg class="b" style="left:547px;top:337px" width="21" height="21" viewBox="0 0 21 21" ><rect x="5" y="13" width="7" height="3" fill="#fff"/></svg>
<span class="t " style="left:160.12px;top:360px;letter-spacing:-0.500px;">File</span>
<span class="t " style="left:188.12px;top:360px;letter-spacing:-0.200px;">Edit</span>
<span class="t " style="left:217.53px;top:360px;letter-spacing:-0.055px;">Format</span>
<span class="t " style="left:264.23px;top:360px;letter-spacing:-0.363px;">Message</span>
<span class="t " style="left:318.40px;top:360px;letter-spacing:-0.127px;">Collaborate</span>
<span class="t " style="left:385.90px;top:360px;letter-spacing:-0.950px;">View</span>
<span class="t " style="left:418.82px;top:360px;letter-spacing:-0.358px;">Help</span>
<div class="b " style="left:155px;top:380px;width:461px;height:1px;background:#c5c2b2;"></div>
<div class="b " style="left:155px;top:381px;width:461px;height:1px;background:#fff;"></div>
<div class="b " style="left:155px;top:407px;width:461px;height:1px;background:#c5c2b2;"></div>
<div class="b " style="left:155px;top:408px;width:461px;height:1px;background:#fff;"></div>
<div class="b " style="left:158px;top:383px;width:2px;height:23px;background:#fff;border-right:1px solid #a5a290;border-bottom:1px solid #a5a290;width:3px"></div>
<div class="b " style="left:161px;top:383px;width:2px;height:23px;background:#fff;border-right:1px solid #a5a290;border-bottom:1px solid #a5a290;width:3px"></div>
<div class="b " style="left:241px;top:384px;width:1px;height:22px;background:#aca899;"></div>
<div class="b " style="left:242px;top:384px;width:1px;height:22px;background:#fff;"></div>
<div class="b " style="left:322px;top:384px;width:1px;height:22px;background:#aca899;"></div>
<div class="b " style="left:323px;top:384px;width:1px;height:22px;background:#fff;"></div>
<div class="b " style="left:427px;top:384px;width:1px;height:22px;background:#aca899;"></div>
<div class="b " style="left:428px;top:384px;width:1px;height:22px;background:#fff;"></div>
<div class="b " style="left:155px;top:426px;width:461px;height:1px;background:#000;"></div>
<svg class="b" style="left:171px;top:393px" width="14" height="9" viewBox="0 0 14 9" ><rect x="0.75" y="0.75" width="12" height="7.5" fill="#fff" stroke="#2a1a1a" stroke-width="1.5"/><rect x="1.5" y="1.3" width="10.5" height="1" fill="#9a2020"/><rect x="9.2" y="1.2" width="3" height="2.6" fill="#c81818"/><path d="M3 4.5H8.5M3 6.2H8.5" stroke="#555" stroke-width="0.9"/><path d="M1 8.6H13.4V2" stroke="#6a2020" stroke-width="0.8" fill="none"/></svg>
<svg class="b" style="left:180px;top:385px" width="7" height="7" viewBox="0 0 7 7" ><path d="M6 0.5L2.5 4M1.5 1.5V3.5M2 5.5H6" stroke="#000" stroke-width="0.9" fill="none"/></svg>
<svg class="b" style="left:193px;top:387px" width="17" height="15" viewBox="0 0 17 15" ><rect x="1" y="7.5" width="9" height="6" fill="#f4f2e8" stroke="#b5b2a2" stroke-width="1"/><path d="M3 9.5H8M3 11.5H7" stroke="#c0bdae" stroke-width="1"/><path d="M7 2.5H13Q15 2.5 15 5V8Q15 10 12 10" fill="none" stroke="#b5b2a2" stroke-width="1"/><path d="M1.5 14.5H10.5" stroke="#fff" stroke-width="1"/></svg>
<svg class="b" style="left:217px;top:388px" width="12" height="13" viewBox="0 0 12 13" ><path d="M3.3 0.8H10.2V11.2H0.8V3.3Z" fill="#f6f6f6" stroke="#000" stroke-width="1.5" stroke-linejoin="round"/><path d="M10.4 2V11.4H2" stroke="#000" stroke-width="0.8" fill="none"/></svg>
<svg class="b" style="left:227px;top:385px" width="7" height="7" viewBox="0 0 7 7" ><path d="M6 0.5L2.5 4M1.5 1.5V3.5M2 5.5H6" stroke="#000" stroke-width="0.9" fill="none"/></svg>
<svg class="b" style="left:249px;top:386px" width="15" height="16" viewBox="0 0 15 16" ><path d="M1 1.5H12M3 4.5H13M1.5 7.5H12.5V14.5H1.5ZM4 10.5H10M4 12.5H10" fill="none" stroke="#b5b2a2" stroke-width="1"/><path d="M2 15.5H13.5V8" fill="none" stroke="#fff" stroke-width="1"/></svg>
<svg class="b" style="left:275px;top:386px" width="13" height="16" viewBox="0 0 13 16" ><path d="M4.5 2.5V1H8.5V2.5M1 3.5H12M2.5 4.5V14.5H10.5V4.5M4.5 6V13M6.5 6V13M8.5 6V13" fill="none" stroke="#b5b2a2" stroke-width="1"/><path d="M3.5 15.5H11.5V5" fill="none" stroke="#fff" stroke-width="1"/></svg>
<svg class="b" style="left:297px;top:386px" width="18" height="16" viewBox="0 0 18 16" ><path d="M2 1.5H8M1 4.5H7M2 7.5H8M1 10.5H7M2 13.5H8" stroke="#b5b2a2" stroke-width="1" fill="none"/><rect x="10.5" y="4.5" width="6" height="5" fill="#f4f2e8" stroke="#b5b2a2"/><path d="M9 7H10.5" stroke="#b5b2a2"/><path d="M11.5 10.5H17.5V5.5" stroke="#fff" fill="none"/></svg>
<svg class="b" style="left:331px;top:388px" width="16" height="12" viewBox="0 0 16 12" ><path d="M0.5 0.5V9.5M0.5 0.5H7.5V4.5H1" fill="none" stroke="#b5b2a2"/><path d="M1.5 10V5.5H8.5V1.5" fill="none" stroke="#fff"/><path d="M10.5 2L13.5 5L10.5 8" fill="none" stroke="#b5b2a2"/></svg>
<svg class="b" style="left:356px;top:386px" width="14" height="16" viewBox="0 0 14 16" ><path d="M0.5 3.5L3.5 0.5M5.5 1.5H12.5V5.5H5.5ZM5.5 8.5H12.5V13.5H5.5ZM7 10.5H11" fill="none" stroke="#b5b2a2"/><path d="M6.5 6.5H13.5V2.5M6.5 14.5H13.5V9.5" fill="none" stroke="#fff"/></svg>
<svg class="b" style="left:378.5px;top:386px" width="15" height="16" viewBox="0 0 15 16" ><path d="M1.5 1.5H8.5V5.5H1.5ZM1.5 8.5H8.5V13.5H1.5ZM3 10.5H7M10.5 9.5L13.5 5.5" fill="none" stroke="#b5b2a2"/><path d="M2.5 6.5H9.5V2.5M2.5 14.5H9.5V9.5" fill="none" stroke="#fff"/></svg>
<svg class="b" style="left:402.5px;top:388px" width="15" height="11.2" viewBox="0 0 16 12"><path d="M1 2.2Q1 1 2.2 1H5.5L7 2.8H13.8Q15 2.8 15 4V9.8Q15 11 13.8 11H2.2Q1 11 1 9.8Z" fill="#f7f3a0" stroke="#000" stroke-width="1.5"/><path d="M2.3 9.6H13.6" stroke="#c8c060" stroke-width="1"/><path d="M5.5 8H10.5M5.5 8V4.8M3.8 6.2L5.5 4.4L7.2 6.2" fill="none" stroke="#000" stroke-width="1.3"/></svg>
<svg class="b" style="left:436px;top:386px" width="18" height="18" viewBox="0 0 18 18" ><path d="M3 4.5H7.5M5.2 2.2V6.8" stroke="#fff" stroke-width="1.6"/><path d="M2 3.5H6.5M4.2 1.2V5.8" stroke="#b0ad9c" stroke-width="1.6"/><ellipse cx="13.3" cy="7.3" rx="3.3" ry="2.1" fill="#fbfaf4" stroke="#fff" stroke-width="1"/><ellipse cx="12.5" cy="6.5" rx="3.3" ry="2.1" fill="#f4f2e6" stroke="#b0ad9c" stroke-width="1" stroke-dasharray="2 1"/><rect x="9.3" y="1.8" width="1.3" height="2" fill="#b0ad9c"/><rect x="10.6" y="2.8" width="1" height="1" fill="#fff"/><rect x="11.9" y="1.8" width="1.3" height="2" fill="#b0ad9c"/><rect x="13.2" y="2.8" width="1" height="1" fill="#fff"/><rect x="14.5" y="1.8" width="1.3" height="2" fill="#b0ad9c"/><rect x="15.8" y="2.8" width="1" height="1" fill="#fff"/><ellipse cx="6.8" cy="14.8" rx="5.2" ry="2.9" fill="#fbfaf4" stroke="#fff" stroke-width="1"/><ellipse cx="6" cy="14" rx="5.2" ry="2.9" fill="#f4f2e6" stroke="#b0ad9c" stroke-width="1" stroke-dasharray="2 1"/><rect x="1.2" y="8.4" width="1.3" height="2" fill="#b0ad9c"/><rect x="2.5" y="9.4" width="1" height="1" fill="#fff"/><rect x="4" y="8.4" width="1.3" height="2" fill="#b0ad9c"/><rect x="5.3" y="9.4" width="1" height="1" fill="#fff"/><rect x="6.8" y="8.4" width="1.3" height="2" fill="#b0ad9c"/><rect x="8.1" y="9.4" width="1" height="1" fill="#fff"/><rect x="9.6" y="8.4" width="1.3" height="2" fill="#b0ad9c"/><rect x="10.9" y="9.4" width="1" height="1" fill="#fff"/><path d="M14.5 16V11.5" stroke="#b0ad9c" stroke-width="1"/><path d="M15.5 16.5V12" stroke="#fff" stroke-width="1"/></svg>
<svg class="b" style="left:460px;top:386px" width="18" height="18" viewBox="0 0 18 18" ><ellipse cx="7.8" cy="8" rx="6.2" ry="3.6" fill="#fbfaf4" stroke="#fff" stroke-width="1"/><ellipse cx="7" cy="7.2" rx="6.2" ry="3.6" fill="#f4f2e6" stroke="#b0ad9c" stroke-width="1" stroke-dasharray="2 1"/><rect x="1.9" y="1.4" width="1.3" height="2" fill="#b0ad9c"/><rect x="3.2" y="2.4" width="1" height="1" fill="#fff"/><rect x="4.9" y="1.4" width="1.3" height="2" fill="#b0ad9c"/><rect x="6.2" y="2.4" width="1" height="1" fill="#fff"/><rect x="7.9" y="1.4" width="1.3" height="2" fill="#b0ad9c"/><rect x="9.2" y="2.4" width="1" height="1" fill="#fff"/><rect x="10.9" y="1.4" width="1.3" height="2" fill="#b0ad9c"/><rect x="12.2" y="2.4" width="1" height="1" fill="#fff"/><path d="M14.5 10.5V16.5M14.5 14.5H16.5" stroke="#fff" stroke-width="1.2" fill="none"/><circle cx="13.5" cy="10" r="1.6" fill="none" stroke="#b0ad9c" stroke-width="1.2"/><path d="M13.5 11.5V16M13.5 14H15.2" stroke="#b0ad9c" stroke-width="1.2" fill="none"/></svg>
<svg class="b" style="left:484px;top:385px" width="16" height="17" viewBox="0 0 16 17" ><path d="M7.2 9.2L1.6 14.8" stroke="#000" stroke-width="3.4" stroke-linecap="round"/><path d="M7 9.4L1.8 14.6" stroke="#f0b820" stroke-width="1.6" stroke-linecap="round"/><circle cx="10.5" cy="5.8" r="4.6" fill="#d6ecfb" stroke="#000" stroke-width="1.3"/><path d="M8 4.5Q9 2.8 11 2.6" stroke="#fff" stroke-width="1.3" fill="none"/></svg>
<svg class="b" style="left:510px;top:386px" width="16" height="17" viewBox="0 0 16 17" ><circle cx="7.8" cy="10.8" r="5.6" fill="none" stroke="#fff" stroke-width="1.3"/><circle cx="7" cy="10" r="5.6" fill="#f4f2e6" stroke="#b0ad9c" stroke-width="1.2"/><path d="M5.8 9H7.8V13H9" stroke="#b0ad9c" stroke-width="1.4" fill="none"/><rect x="6.6" y="6" width="1.6" height="1.6" fill="#b0ad9c"/><path d="M8 3.5H14.5" stroke="#b0ad9c" stroke-dasharray="1.3 1" stroke-width="1.5"/><path d="M9 4.8H15" stroke="#fff" stroke-dasharray="1.3 1" stroke-width="1"/></svg>
<svg class="b" style="left:156.5px;top:338.5px" width="17" height="17" viewBox="0 0 34 34"><path d="M15 26L31.5 10.5Q33 10 32.6 12L27 24L15.5 32.6L12.5 30.5Z" fill="#a0a0ee" stroke="#6c6cd4" stroke-width="0.7"/><path d="M19 25L31 13M19 28L29 19" stroke="#8484dc" stroke-width="1.1"/><path d="M22 20L31.5 11" stroke="#c4c4f8" stroke-width="0.9"/><path d="M1.5 11.5Q1.5 7.5 7.5 5.8Q10.5 5 12 6.8L13 17L4 21Q1.2 16 1.5 11.5Z" fill="#f8f8ff" stroke="#5a66c8" stroke-width="0.9"/><path d="M2.2 16L12.6 12.4L13 17L4 21Q2.6 18.5 2.2 16Z" fill="#c4c4f4"/><path d="M2.8 19.6L13 15.8L13.6 19.8L4.4 23.6Z" fill="#1b5c9c"/><path d="M3 19.8L13 16.2" stroke="#0e3a70" stroke-width="0.8"/><path d="M4.4 23.6L13.6 19.8L14 22.4L5.4 26Z" fill="#f6f6ec"/><path d="M5.4 26L14 22.4L14.6 30.6L10.4 32L7 29.6Z" fill="#eac648" stroke="#8a6a14" stroke-width="0.5"/><path d="M6.2 27.6L14.2 24.4M7 29.4L14.4 26.6" stroke="#c4922a" stroke-width="0.9"/><path d="M9.5 25V31" stroke="#f8ecb0" stroke-width="1"/><rect x="12" y="1" width="7" height="3.2" fill="#2a2a98"/><path d="M13 2H18" stroke="#8490f4" stroke-width="1"/><path d="M13 4.2H18.6L19.4 10.5H13Z" fill="#f0a04c"/><path d="M14.6 4.6V10M17 4.6V10" stroke="#fde6c4" stroke-width="0.9"/><path d="M19.5 5L25 9.4L24.4 12.5L20 9.5Z" fill="#2a2a90"/><path d="M24.6 11V22.5" stroke="#e28434" stroke-width="1.1"/><path d="M13 10.5L20.5 8.5L24 11.5L23 21L15.2 26L14 22Z" fill="#d9d24a" stroke="#6a6a1c" stroke-width="0.5"/><path d="M13.4 12L20.6 10L23 12" stroke="#f6f2a8" stroke-width="1.2" fill="none"/><circle cx="17.2" cy="17" r="3.3" fill="#1f8f7c" stroke="#0c4a44" stroke-width="0.8"/><circle cx="17.2" cy="17" r="1.3" fill="#e8f6f4"/><path d="M14 22L15.2 26L23 21L22.6 24L15.5 29.5L14.4 27Z" fill="#3a3a84"/><path d="M10.4 32L14.6 30.6L15.5 32.6L12.5 33Z" fill="#20205c"/></svg>
<svg class="b" style="left:161px;top:412px" width="14" height="11" viewBox="0 0 14 11" ><path d="M1 2.2Q1 1 2.2 1H5L6.5 2.5H12Q13 2.5 13 3.5V9Q13 10 12 10H2Q1 10 1 9Z" fill="#a0a0a8" stroke="#303040" stroke-width="1.2"/><path d="M2 4.2H12" stroke="#c8c8d0"/></svg>
<span class="t " style="left:179.93px;top:408px;letter-spacing:-0.265px;">Folder</span>
<span class="t " style="left:220.32px;top:408px;letter-spacing:-0.237px;">3 Files</span>
<span class="t " style="left:256.43px;top:408px;letter-spacing:-0.166px;">0 Folders</span>
<span class="t " style="left:310.93px;top:408px;letter-spacing:-0.148px;">Husky Planes : Michael Green</span>
<svg class="b" style="left:584px;top:412px" width="9" height="12" viewBox="0 0 9 12" ><path d="M5.6 0.8L8 2.4L3.6 9.4L1.2 7.8Z" fill="#f2cc30" stroke="#000" stroke-width="1"/><path d="M3 5L6 3" stroke="#8a6a00" stroke-width="0.6"/><path d="M1.2 7.8L0.6 11.2L3.6 9.4Z" fill="#000"/></svg>
<svg class="b" style="left:595px;top:411px" width="17" height="14" viewBox="0 0 17 14" ><path d="M13.6 0.8L16 2.4L11.6 9.4L9.2 7.8Z" fill="#f2cc30" stroke="#000" stroke-width="1"/><path d="M9.2 7.8L8.6 11.2L11.6 9.4Z" fill="#000"/><circle cx="2.8" cy="11" r="1.8" fill="none" stroke="#e88a10" stroke-width="1.5"/><path d="M4.5 11.2H9.5M7.5 11.2V13M9 11.2V13" stroke="#e88a10" stroke-width="1.4"/></svg>
<div class="b " style="left:155px;top:427px;width:461px;height:121px;background:#fff;"></div>
<div class="b " style="left:155px;top:426px;width:461px;height:1px;background:#000;"></div>
<div class="b " style="left:155px;top:441px;width:461px;height:1px;background:#000;"></div>
<div class="b hc" style="left:155px;top:427px;width:15px;height:14px;"></div>
<div class="b hc" style="left:171px;top:427px;width:11px;height:14px;"></div>
<div class="b hc" style="left:183px;top:427px;width:11px;height:14px;"></div>
<div class="b hc" style="left:195px;top:427px;width:191px;height:14px;"></div>
<div class="b hc" style="left:387px;top:427px;width:39px;height:14px;"></div>
<div class="b hc" style="left:427px;top:427px;width:120px;height:14px;"></div>
<div class="b hc" style="left:548px;top:427px;width:67px;height:14px;"></div>
<div class="b " style="left:170px;top:427px;width:1px;height:14px;background:#000;"></div>
<div class="b " style="left:182px;top:427px;width:1px;height:14px;background:#000;"></div>
<div class="b " style="left:194px;top:427px;width:1px;height:14px;background:#000;"></div>
<div class="b " style="left:386px;top:427px;width:1px;height:14px;background:#000;"></div>
<div class="b " style="left:426px;top:427px;width:1px;height:14px;background:#000;"></div>
<div class="b " style="left:547px;top:427px;width:1px;height:14px;background:#000;"></div>
<div class="b " style="left:615px;top:427px;width:1px;height:14px;background:#000;"></div>
<svg class="b" style="left:157px;top:431px" width="10" height="7" viewBox="0 0 10 7" ><rect x="0.5" y="0.5" width="9" height="6" fill="#eeeefc" stroke="#4a4a9c"/><path d="M2 2.5H5.5M2 4.5H5.5" stroke="#8888c4"/><rect x="1" y="5" width="8" height="1" fill="#b4b4e0"/><rect x="6" y="1" width="3" height="2.4" fill="#2a2060"/></svg>
<svg class="b" style="left:172px;top:430px" width="8" height="9" viewBox="0 0 8 9" ><rect x="0" y="0" width="1.4" height="8.6" fill="#b01010"/><rect x="0" y="0" width="7" height="3.9" fill="#e81414"/></svg>
<svg class="b" style="left:185px;top:427.5px" width="6" height="13" viewBox="0 0 6 13" ><path d="M1 4V9.5Q1 11.4 3 11.4Q5 11.4 5 9.5V2.6Q5 0.9 3 0.9Q1 0.9 1 2.6" fill="#fff" stroke="#0c1ea8" stroke-width="1.5"/><path d="M3 3V8.2" stroke="#0c1ea8" stroke-width="1.2"/></svg>
<span class="t " style="left:195.72px;top:424px;letter-spacing:-0.575px;">Name</span>
<span class="t " style="left:403.50px;top:424px;letter-spacing:-0.100px;">Size</span>
<span class="t " style="left:427.82px;top:424px;letter-spacing:-0.065px;">Last Modified</span>
<span class="t " style="left:548.50px;top:424px;letter-spacing:-0.254px;">Subject</span>
<svg class="b" style="left:533px;top:429px" width="12" height="12" viewBox="0 0 12 12" ><path d="M0 1.5H11M3 4.5H11M6 7.5H11M8.5 10.5H11" stroke="#000" stroke-width="1"/></svg>
<svg class="b" style="left:157.5px;top:443px" width="10" height="12" viewBox="0 0 10 12" ><path d="M0.5 0.5H6.5L9.5 3.5V11.5H0.5Z" fill="#dcdcf8" stroke="#4a4aa0"/><path d="M6.5 0.5V3.5H9.5" fill="#f4f4ff" stroke="#4a4aa0"/><path d="M1.5 10.5H8.5V4.5" stroke="#9c9cd4" fill="none"/><path d="M1.5 1.5H5.5" stroke="#f6f6ff"/></svg>
<span class="t " style="left:195.93px;top:439px;letter-spacing:0.103px;">Brochures</span>
<span class="t " style="left:398.25px;top:439px;letter-spacing:-0.125px;">167K</span>
<span class="t " style="left:427.95px;top:439px;letter-spacing:0.025px;">12/12/2008</span>
<span class="t " style="left:488.45px;top:439px;letter-spacing:0.068px;">11:36 AM</span>
<svg class="b" style="left:157.5px;top:458px" width="10" height="12" viewBox="0 0 10 12" ><path d="M0.5 0.5H6.5L9.5 3.5V11.5H0.5Z" fill="#dcdcf8" stroke="#4a4aa0"/><path d="M6.5 0.5V3.5H9.5" fill="#f4f4ff" stroke="#4a4aa0"/><path d="M1.5 10.5H8.5V4.5" stroke="#9c9cd4" fill="none"/><path d="M1.5 1.5H5.5" stroke="#f6f6ff"/></svg>
<span class="t " style="left:195.93px;top:454px;letter-spacing:-0.055px;">Booth signs</span>
<span class="t " style="left:398.50px;top:454px;letter-spacing:-0.208px;">256K</span>
<span class="t " style="left:427.95px;top:454px;letter-spacing:0.025px;">12/12/2008</span>
<span class="t " style="left:488.45px;top:454px;letter-spacing:0.068px;">11:38 AM</span>
<svg class="b" style="left:157.5px;top:473px" width="10" height="12" viewBox="0 0 10 12" ><path d="M0.5 0.5H6.5L9.5 3.5V11.5H0.5Z" fill="#dcdcf8" stroke="#4a4aa0"/><path d="M6.5 0.5V3.5H9.5" fill="#f4f4ff" stroke="#4a4aa0"/><path d="M1.5 10.5H8.5V4.5" stroke="#9c9cd4" fill="none"/><path d="M1.5 1.5H5.5" stroke="#f6f6ff"/></svg>
<span class="t " style="left:196.30px;top:469px;letter-spacing:0.228px;">Giveaways</span>
<span class="t " style="left:401.23px;top:469px;letter-spacing:-0.075px;">34 K</span>
<span class="t " style="left:427.95px;top:469px;letter-spacing:-0.034px;">12/8/2008</span>
<span class="t " style="left:482.80px;top:469px;letter-spacing:-0.488px;">2:21 PM</span>
<div class="b " style="left:155px;top:532px;width:461px;height:16px;background:linear-gradient(to bottom,#f3f1ec,#fefefb);"></div>
<div class="b " style="left:157px;top:533px;width:14px;height:14px;background:#c1d2f5;border:1px solid #fff;border-radius:2px;"></div>
<svg class="b" style="left:157px;top:533px" width="14" height="14" viewBox="0 0 14 14" ><path d="M8.5 3.5L5 7L8.5 10.5" stroke="#4d6185" stroke-width="2" fill="none"/></svg>
<div class="b " style="left:600px;top:533px;width:14px;height:14px;background:#c1d2f5;border:1px solid #fff;border-radius:2px;"></div>
<svg class="b" style="left:600px;top:533px" width="14" height="14" viewBox="0 0 14 14" ><path d="M5.5 3.5L9 7L5.5 10.5" stroke="#4d6185" stroke-width="2" fill="none"/></svg>
<div class="b " style="left:173px;top:533px;width:15px;height:14px;background:#c1d2f5;border:1px solid #fff;border-radius:2px;"></div>
<svg class="b" style="left:173px;top:533px" width="15" height="14" viewBox="0 0 15 14" ><path d="M4.5 4V10M6.5 4V10M8.5 4V10M10.5 4V10" stroke="#8aa5e0" stroke-width="1"/></svg>
<div class="b " style="left:155px;top:548px;width:461px;height:1px;background:#fff;"></div>
<span class="t " style="left:160px;top:546.5px;letter-spacing:-0.379px;">3 Items.</span>
</div></div>
</div></body></html>
